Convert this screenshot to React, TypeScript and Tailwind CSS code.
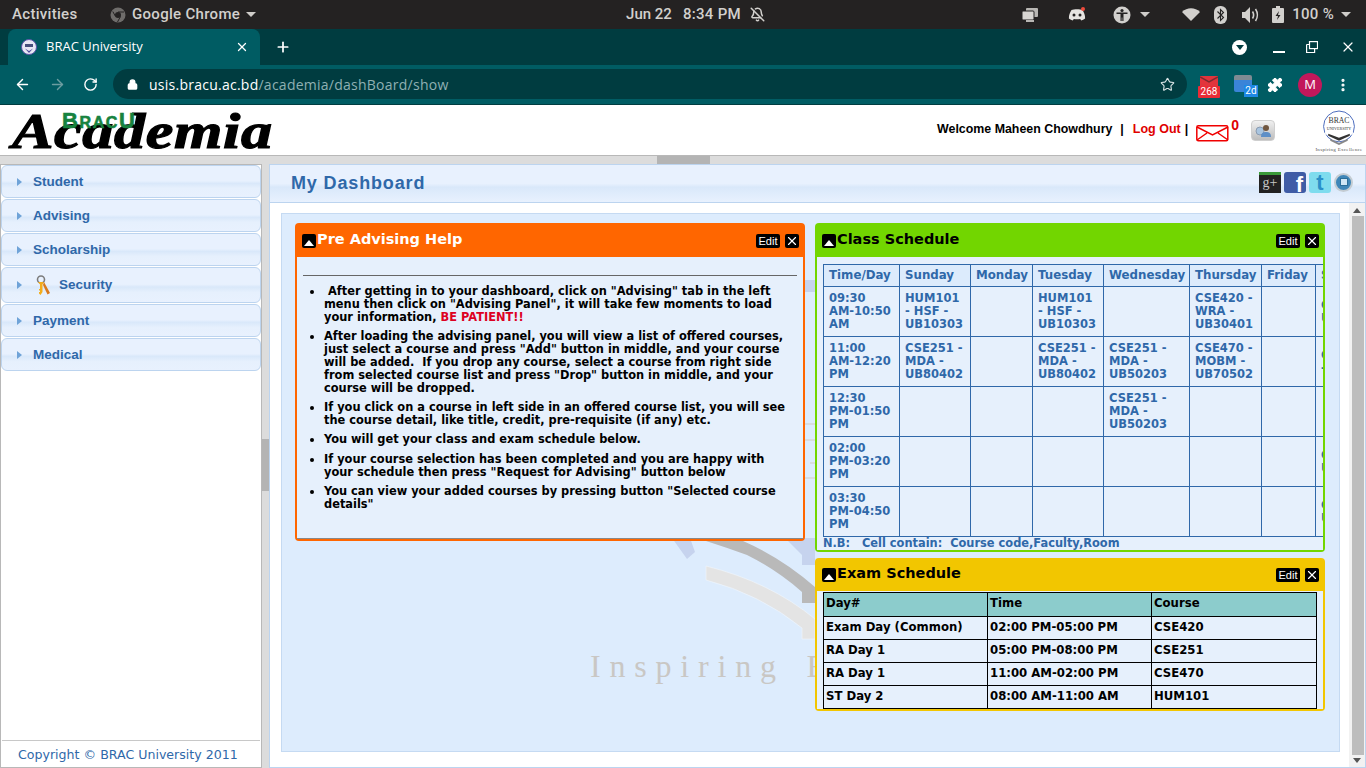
import React from "react";
import { ArrowLeft, ArrowRight, RotateCw, Lock, Star, Puzzle, X, Plus, BellOff, EllipsisVertical } from "lucide-react";

const Caret = () => <span className="inline-block w-0 h-0 border-l-[5px] border-r-[5px] border-t-[5px] border-l-transparent border-r-transparent border-t-[#cfcdca]" />;

function TopBar() {
  return (
    <div className="h-[29px] bg-[#242222] flex items-center text-[#d2d0cd] text-[15px] font-medium font-['Roboto',sans-serif] tracking-[0.3px]">
      <span className="ml-[12px] w-[98px]">Activities</span>
      <svg width="16" height="16" viewBox="0 0 16 16" className="mr-[6px]"><circle cx="8" cy="8" r="7.5" fill="#6f6d6b"/><circle cx="8" cy="8" r="3" fill="#242222"/><path d="M8 5h6M5.5 9.5 2.8 4.5M10.5 9.500 7.500 15" stroke="#242222" strokeWidth="1"/></svg>
      <span>Google Chrome</span>
      <span className="ml-[6px] flex"><Caret /></span>
      <div className="flex-1 flex items-center">
        <span className="ml-[370px] tracking-normal">Jun 22</span>
        <span className="ml-[11px]">8:34 PM</span>
        <BellOff size={15} className="ml-[9px]" strokeWidth={2.4} />
      </div>
      <div className="flex items-center">
        <svg width="18" height="16" viewBox="0 0 18 16" className="mr-[29px]"><rect x="5" y="1" width="12" height="9" rx="1" fill="#b9b7b4"/><rect x="1" y="4" width="12" height="9" rx="1" fill="#d8d6d3" stroke="#242222"/><rect x="5" y="13" width="8" height="2" fill="#b9b7b4"/></svg>
        <svg width="18" height="15" viewBox="0 0 18 15" className="mr-[27px]"><path d="M3.500 3C6 2 12 2 14.500 3c1.600 2.500 2.700 5 2.600 8.500-1.300 1-2.600 1.600-3.900 2l-1-1.600c-2 .5-4.400.5-6.400 0l-1 1.600c-1.300-.4-2.600-1-3.900-2C.8 8 1.900 5.500 3.500 3z" fill="#e6e4e1"/><circle cx="6" cy="8" r="1.500" fill="#242222"/><circle cx="12" cy="8" r="1.500" fill="#242222"/><circle cx="15" cy="2" r="2" fill="#ef4b3c"/></svg>
        <svg width="18" height="18" viewBox="0 0 18 18" className="mr-[9px]"><circle cx="9" cy="9" r="8.500" fill="#d2d0cd"/><circle cx="9" cy="4.500" r="1.600" fill="#242222"/><path d="M3.500 6.500h11v1.500h-4v7h-1.200v-3.500h-.6v3.500h-1.200v-7h-4z" fill="#242222"/></svg>
        <span className="mr-[32px] flex"><Caret /></span>
        <svg width="18" height="13" viewBox="0 0 18 13" className="mr-[14px]"><path d="M0 4C5-1 13-1 18 4l-9 9z" fill="#d2d0cd"/></svg>
        <svg width="13" height="18" viewBox="0 0 13 18" className="mr-[15px]"><rect width="13" height="18" rx="6" fill="#d2d0cd"/><path d="M3.500 5.500l6 6-3 3v-11l3 3-6 6" fill="none" stroke="#242222" strokeWidth="1.100"/></svg>
        <svg width="17" height="16" viewBox="0 0 17 16" className="mr-[13px]"><path d="M0 5h3l5-5v16l-5-5H0z" fill="#d2d0cd"/><path d="M10.500 4.500c1.300 2 1.300 5 0 7M13.500 2c2.400 3.500 2.400 8.500 0 12" fill="none" stroke="#d2d0cd" strokeWidth="1.600"/></svg>
        <svg width="12" height="17" viewBox="0 0 12 17" className="mr-[8px]"><path d="M4 0h4v2h3a1 1 0 0 1 1 1v13a1 1 0 0 1-1 1H1a1 1 0 0 1-1-1V3a1 1 0 0 1 1-1h3z" fill="#d2d0cd"/><path d="M7 5 3.500 10H6l-1 4 3.500-5H6z" fill="#242222"/></svg>
        <span>100 %</span>
        <span className="ml-[7px] mr-[15px] flex"><Caret /></span>
      </div>
    </div>
  );
}

function TabStrip() {
  return (
    <div className="h-[36px] bg-[#003c40] flex items-stretch text-white">
      <div className="ml-[8px] w-[252px] bg-[#005c63] rounded-t-[8px] flex items-center pl-[13px] pr-[11px] font-['Open_Sans',sans-serif] text-[13px]">
        <svg width="16" height="16" viewBox="0 0 16 16" className="mr-[9px]"><circle cx="8" cy="8" r="7.500" fill="#e8e8f4" stroke="#5a54a8" strokeWidth="1"/><rect x="4" y="5" width="8" height="3" fill="#46507c"/><path d="M4 9.500 8 12l4-2.500L8 14z" fill="#4a4a9a"/></svg>
        <span className="flex-1">BRAC University</span>
        <X size={14} strokeWidth={2.2} />
      </div>
      <div className="ml-[15px] flex items-center"><Plus size={16} strokeWidth={2.6} /></div>
      <div className="flex-1" />
      <div className="flex items-center">
        <span className="w-[15px] h-[15px] rounded-full bg-white flex items-center justify-center mr-[26px]"><span className="w-0 h-0 border-l-[4px] border-r-[4px] border-t-[5px] border-l-transparent border-r-transparent border-t-[#003c40] mt-[1px]" /></span>
        <span className="w-[12px] h-[2px] bg-white mr-[21px] mt-[9px]" />
        <svg width="12" height="12" viewBox="0 0 12 12" className="mr-[22px]" fill="none" stroke="#fff" strokeWidth="1.200"><rect x="3.500" y=".6" width="8" height="7"/><path d="M.6 3.500h2.500M.6 3.500v8h8V8"/></svg>
        <X size={16} strokeWidth={1.800} className="mr-[10px]" />
      </div>
    </div>
  );
}

function Toolbar() {
  return (
    <div className="h-[40px] bg-[#005c63] border-b border-[#003c40] flex items-center text-white">
      <ArrowLeft size={17} className="ml-[14px]" strokeWidth={2} />
      <ArrowRight size={17} className="ml-[18px] text-[#6c9da1]" strokeWidth={2} />
      <RotateCw size={15} className="ml-[17px]" strokeWidth={2.200} />
      <div className="ml-[15px] w-[1074px] h-[30px] rounded-full bg-[#003c40] flex items-center pl-[14px] pr-[12px] mb-[1px]">
        <Lock size={11} strokeWidth={3} fill="#fff" className="mr-[11px]" />
        <span className="flex-1 font-['Open_Sans',sans-serif] text-[14px] tracking-[0.25px] text-white">usis.bracu.ac.bd<span className="text-[#8fb0b3]">/academia/dashBoard/show</span></span>
        <Star size={15} strokeWidth={1.800} className="text-[#d7e3e4]" />
      </div>
      <div className="relative ml-[11px] mt-[4px] w-[22px] h-[22px]">
        <svg width="18" height="10" viewBox="0 0 18 10" className="absolute left-[2px] top-0"><path d="M0 0h18v10H0z" fill="#e2343c"/><path d="M0 1l9 5 9-5" fill="none" stroke="#7d2a30" strokeWidth="1.500"/></svg>
        <span className="absolute left-0 top-[10px] w-[22px] h-[12px] bg-[#ea2b36] rounded-[1px] text-[10px] leading-[12px] text-white text-center font-['Roboto',sans-serif]">268</span>
      </div>
      <div className="relative ml-[14px] mt-[3px] w-[24px] h-[22px]">
        <span className="absolute left-0 top-0 w-[18px] h-[17px] rounded-[2px] bg-[#3a84d8] border-t-[5px] border-[#7f8b93]" />
        <span className="absolute right-0 bottom-0 w-[14px] h-[12px] bg-[#1e88e5] text-[10px] leading-[12px] text-center text-white font-['Roboto',sans-serif]">2d</span>
      </div>
      <Puzzle size={16} fill="#fff" className="ml-[9px]" strokeWidth={1.500} />
      <span className="ml-[15px] w-[24px] h-[24px] rounded-full bg-[#c2185b] text-[13px] flex items-center justify-center font-['Open_Sans',sans-serif]">M</span>
      <EllipsisVertical size={16} strokeWidth={2.800} className="ml-[13px]" />
    </div>
  );
}

function Header() {
  return (
    <div className="h-[51px] bg-white border-b border-[#b8b8b8] flex items-start font-['Liberation_Sans',sans-serif] relative">
      <div className="relative ml-[8px] mt-[2px] w-[266px] h-[46px]">
        <span className="absolute left-[4px] top-[-2px] font-['Liberation_Serif',serif] font-bold italic text-[51px] leading-[52px] text-black tracking-[0.5px] [-webkit-text-stroke:1.2px_black] origin-left scale-x-[1.22] whitespace-nowrap">Academia</span>
        <span className="absolute left-[54px] top-[3px] font-bold text-[#17833f] text-[22px] leading-[22px] [-webkit-text-stroke:0.6px_#17833f] whitespace-nowrap tracking-[1.6px]">B<span className="text-[16px]">RAC</span>U</span>
      </div>
      <div className="flex-1" />
      <div className="flex items-center h-[48px] text-[12.400px] font-bold text-black">
        <span>Welcome Maheen Chowdhury</span>
        <span className="ml-[8px]">|</span>
        <span className="ml-[9px] text-[#e00000] text-[12.500px]">Log Out</span>
        <span className="ml-[4px]">|</span>
        <svg width="33" height="17" viewBox="0 0 33 17" className="ml-[8px] mt-[8px]" fill="none" stroke="#f00000" strokeWidth="1.500"><rect x=".8" y=".8" width="31" height="15" rx="1.500"/><path d="M1 2l15.500 8L32 2M1 15l10-7M32 15 22 8"/></svg>
        <span className="ml-[2px] text-[#e00000] text-[14px] mb-[8px]">0</span>
        <span className="ml-[12px] mt-[3px] w-[24px] h-[21px] rounded-[4px] bg-gradient-to-b from-[#f0f0f0] to-[#bdbdbd] border border-[#cfcfcf] flex items-center justify-center"><svg width="18" height="14" viewBox="0 0 18 14"><circle cx="6" cy="7" r="4" fill="#a9c5e0" stroke="#8a9bb0"/><circle cx="12" cy="4" r="3" fill="#70563f"/><path d="M7 13c0-4 2-5 5-5s5 1 5 5z" fill="#5d8fc7"/></svg></span>
      </div>
      <div className="ml-[43px] mr-[6px] mt-[5px] w-[42px] flex flex-col items-center">
        <svg width="34" height="37" viewBox="0 0 33 36">
          <circle cx="16.500" cy="16" r="15" fill="#fff" stroke="#3f62b8" strokeWidth="0.900"/>
          <path d="M3 21h27v3H3z" fill="#fff"/>
          <text x="16.500" y="13" textAnchor="middle" fontSize="7.500" fontFamily="Liberation Serif" fill="#333">BRAC</text>
          <text x="16.500" y="19" textAnchor="middle" fontSize="4" fontFamily="Liberation Serif" fill="#333">UNIVERSITY</text>
          <path d="M6 23l10.500 4L27 23v2l-10.500 5L6 25z" fill="#333"/><path d="M8 28l8.500 4L25 28v2l-8.500 4L8 30z" fill="#888"/>
        </svg>
        <span className="font-['Liberation_Serif',serif] font-normal text-[5px] leading-[5px] text-[#555] tracking-[0.3px] whitespace-nowrap">Inspiring Excellence</span>
      </div>
    </div>
  );
}

const menu = ["Student", "Advising", "Scholarship", "Security", "Payment", "Medical"];

function Sidebar() {
  return (
    <div className="w-[262px] bg-white border border-[#b8b8b8] flex flex-col font-['Liberation_Sans',sans-serif]">
      <div className="flex-1 flex flex-col gap-[1px]">
        {menu.map((m) => (
          <div key={m} className={`${m === "Security" ? "h-[36px]" : "h-[33px]"} rounded-[6px] border border-[#bcd4ef] bg-[linear-gradient(#e8f1fe_0%,#e8f1fe_48%,#d9e8fa_56%,#e6f0fd_72%,#e8f1fe_100%)] flex items-center pl-[15px] text-[13.500px] font-bold text-[#2f68a9]`}>
            <span className="w-0 h-0 border-t-[4px] border-b-[4px] border-l-[5px] border-t-transparent border-b-transparent border-l-[#6fa3d8]" />
            {m === "Security" && (
              <svg width="20" height="21" viewBox="0 0 20 21" className="ml-[11px] mr-[6px]"><circle cx="8" cy="4.500" r="3.500" fill="none" stroke="#7c7c7c" strokeWidth="1.600"/><path d="M5 7h6l-1.500 2.500V17l-2 3-1.500-1.500V17h1v-1.500H6V14h1V9.500z" fill="#f3ad1c"/><path d="M11 7l6 11-2.500 1.500L10 10z" fill="#d9791c"/></svg>
            )}
            <span className={m === "Security" ? "mt-[1px]" : "ml-[11px] mt-[1px]"}>{m}</span>
          </div>
        ))}
      </div>
      <div className="mx-[1px] h-[27px] border-t border-[#c8c8c8] pl-[16px] text-[12.600px] leading-[28px] text-[#2f68a9] font-['DejaVu_Sans',sans-serif]">Copyright © BRAC University 2011</div>
    </div>
  );
}

const Controls = () => (
  <div className="flex items-center gap-[5px] mt-[4px]">
    <span className="h-[14px] rounded-[2px] bg-black text-white text-[11px] leading-[14px] font-['Liberation_Sans',sans-serif] font-normal w-[24px] text-center">Edit</span>
    <span className="h-[14px] w-[14px] rounded-[2px] bg-black flex items-center justify-center"><X size={14} color="#fff" strokeWidth={2} /></span>
  </div>
);

const Toggle = () => (
  <span className="w-[14px] h-[14px] rounded-[2px] bg-black flex items-end justify-center pb-[2px] mt-[4px]"><span className="w-0 h-0 border-l-[5px] border-r-[5px] border-b-[6px] border-l-transparent border-r-transparent border-b-white" /></span>
);

function WidgetHead({ title, dark, h }: { title: string; dark?: boolean; h: string }) {
  return (
    <div className={`${h} flex items-start pl-[5px] pr-[4px]`}>
      <Toggle />
      <span className={`flex-1 ml-[1px] text-[14.500px] leading-[18px] font-bold ${dark ? "text-black" : "text-white"}`}>{title}</span>
      <Controls />
    </div>
  );
}

function PreAdvising() {
  const li = "mb-[6px]";
  return (
    <div className="h-[318px] rounded-[4px] bg-[#ff6600] px-[2px] pb-[2px] flex flex-col">
      <WidgetHead title="Pre Advising Help" h="h-[34px] pt-[7px]" />
      <div className="flex-1 bg-[#e6f0fc] px-[6px] pt-[18px] text-[11.400px] leading-[13px] font-bold text-black border-b border-[#888]">
        <div className="border-t border-[#666] mb-[10px]" />
        <ul className="list-disc pl-[21px] pr-[8px] m-0">
          <li className="mb-[6px] -mt-[1px]">&nbsp;After getting in to your dashboard, click on "Advising" tab in the left menu then click on "Advising Panel", it will take few moments to load your information, <span className="text-[#dd0022]">BE PATIENT!!</span></li>
          <li className={li}>After loading the advising panel, you will view a list of offered courses, just select a course and press "Add" button in middle, and your course will be added.&nbsp; If you drop any course, select a course from right side from selected course list and press "Drop" button in middle, and your course will be dropped.</li>
          <li className={li}>If you click on a course in left side in an offered course list, you will see the course detail, like title, credit, pre-requisite (if any) etc.</li>
          <li className="mb-[7px]">You will get your class and exam schedule below.</li>
          <li className={li}>If your course selection has been completed and you are happy with your schedule then press "Request for Advising" button below</li>
          <li>You can view your added courses by pressing button "Selected course details"</li>
        </ul>
      </div>
    </div>
  );
}

const cols = [76, 71, 62, 71, 86, 72, 54, 120];
const days = ["Time/Day", "Sunday", "Monday", "Tuesday", "Wednesday", "Thursday", "Friday", "Saturday"];
const rows = [
  ["09:30 AM-10:50 AM", "HUM101 - HSF - UB10303", "", "HUM101 - HSF - UB10303", "", "CSE420 - WRA - UB30401", "", "CSE420 - WRA - UB30401"],
  ["11:00 AM-12:20 PM", "CSE251 - MDA - UB80402", "", "CSE251 - MDA - UB80402", "CSE251 - MDA - UB50203", "CSE470 - MOBM - UB70502", "", "CSE470 - MOBM - UB70502"],
  ["12:30 PM-01:50 PM", "", "", "", "CSE251 - MDA - UB50203", "", "", ""],
  ["02:00 PM-03:20 PM", "", "", "", "", "", "", "CSE350 - TBA - UB40201"],
  ["03:30 PM-04:50 PM", "", "", "", "", "", "", "CSE350 - TBA - UB40201"],
];

function ClassSchedule() {
  return (
    <div className="h-[329px] rounded-[4px] bg-[#72d600] px-[2px] pb-[2px] flex flex-col">
      <WidgetHead title="Class Schedule" dark h="h-[34px] pt-[7px]" />
      <div className="flex-1 bg-[#e6f0fc] pl-[6px] pt-[7px] overflow-hidden text-[#2f68a9] text-[11.500px] leading-[13px] font-bold">
        <table className="table-fixed border-collapse w-[612px]">
          <colgroup>{cols.map((c, i) => <col key={i} style={{ width: c }} />)}</colgroup>
          <thead>
            <tr className="h-[22px] bg-[#dcebfc]">
              {days.map((d) => <th key={d} className="border border-[#2f68a9] px-[5px] text-left font-bold text-[11.800px] whitespace-nowrap">{d}</th>)}
            </tr>
          </thead>
          <tbody>
            {rows.map((r, i) => (
              <tr key={i} className="h-[50px]">
                {r.map((c, j) => <td key={j} className="border border-[#2f68a9] px-[5px] align-middle">{c}</td>)}
              </tr>
            ))}
          </tbody>
        </table>
        <div className="leading-[13px] whitespace-pre text-[11.400px]">{"N.B:   Cell contain:  Course code,Faculty,Room"}</div>
      </div>
    </div>
  );
}

const exams = [
  ["Exam Day (Common)", "02:00 PM-05:00 PM", "CSE420"],
  ["RA Day 1", "05:00 PM-08:00 PM", "CSE251"],
  ["RA Day 1", "11:00 AM-02:00 PM", "CSE470"],
  ["ST Day 2", "08:00 AM-11:00 AM", "HUM101"],
];

function ExamSchedule() {
  return (
    <div className="h-[153px] rounded-[4px] bg-[#f2c600] px-[2px] pb-[2px] flex flex-col mt-[6px]">
      <WidgetHead title="Exam Schedule" dark h="h-[33px] pt-[6px]" />
      <div className="flex-1 bg-[#e6f0fc] pl-[6px] pr-[6px] pt-[1px] text-black text-[11.700px] leading-[13px] font-bold">
        <table className="table-fixed border-collapse w-[493px] border border-black">
          <colgroup><col className="w-[164px]" /><col className="w-[164px]" /><col className="w-[165px]" /></colgroup>
          <thead>
            <tr className="h-[24px] bg-[#8ccccc]">
              {["Day#", "Time", "Course"].map((h) => <th key={h} className="border border-black px-[2px] pb-[2px] text-left font-bold">{h}</th>)}
            </tr>
          </thead>
          <tbody>
            {exams.map((r, i) => (
              <tr key={i} className="h-[23px]">
                {r.map((c, j) => <td key={j} className="border border-black px-[2px] pb-[2px]">{c}</td>)}
              </tr>
            ))}
          </tbody>
        </table>
      </div>
    </div>
  );
}

function Watermark() {
  return (
    <div className="absolute left-0 top-0 w-full h-full overflow-hidden">
      <svg width="1058" height="536" viewBox="282 214 1058 536" className="absolute left-0 top-0">
        <path d="M805 280h10v12h-10z" fill="#c6d3ee" />
        <path d="M805 424h10M805 440h10M805 478h10M810 463h5" stroke="#d6d6d6" strokeWidth="1.500" fill="none" />
        <path d="M672 538h18l5 14-8 7z" fill="#c6d3ee" />
        <path d="M785 538l17 17v10h13v-27z" fill="#c6d3ee" />
        <path d="M706 541H743Q782 558 815 587V603H802V592Q777 570 747 555Q728 548 706 541z" fill="#b9b9b9" />
        <path d="M706 566Q770 582 815 619V639H802V628Q760 594 706 580z" fill="#e4e4e4" stroke="#f2f6fb" strokeWidth="0.600" />
      </svg>
      <span className="absolute left-[308px] top-[436px] font-['Liberation_Serif',serif] text-[32px] leading-[32px] tracking-[8.800px] [word-spacing:5px] text-[#c9c7c4] whitespace-nowrap">Inspiring Excellence</span>
    </div>
  );
}

function Main() {
  return (
    <div className="flex-1 min-w-0 flex flex-col border border-[#bcd4ef] ml-[7px] font-['DejaVu_Sans',sans-serif]">
      <div className="h-[38px] bg-[linear-gradient(#e8f1fe_0%,#e8f1fe_50%,#d9e8fa_60%,#e8f1fe_100%)] border-b border-[#bcd4ef] flex items-center pl-[21px] pr-[12px]">
        <span className="flex-1 font-['Liberation_Sans',sans-serif] font-bold text-[18px] tracking-[0.85px] text-[#2f68a9]">My Dashboard</span>
        <div className="flex items-center gap-[3px] mt-[-3px]">
          <span className="w-[22px] h-[21px] bg-[#222] text-[#c8c8c8] border-t-[3px] border-[#3a9a3a] text-[14px] leading-[16px] text-center font-['Liberation_Serif',serif]">g+</span>
          <span className="w-[22px] h-[21px] rounded-[3px] bg-[#3f5ca6] text-white text-[22px] leading-[25px] font-bold text-right pr-[3px] overflow-hidden font-['Liberation_Sans',sans-serif]">f</span>
          <span className="w-[22px] h-[21px] rounded-[3px] bg-[#7fdcee] text-[#2a90c8] text-[22px] leading-[22px] font-bold text-center overflow-hidden font-['Liberation_Sans',sans-serif]">t</span>
          <span className="w-[19px] h-[19px] rounded-full bg-[#3f86b8] border-2 border-[#c4ccd2] flex items-center justify-center"><span className="w-[8px] h-[8px] bg-[#cfe6f5] border border-[#2a6e9a]" /></span>
        </div>
      </div>
      <div className="flex-1 min-h-0 bg-white flex">
        <div className="flex-1 pl-[11px] pt-[10px] pr-[9px] pb-[15px] flex flex-col">
          <div className="relative flex-1 bg-[#ddecfd] border border-[#c5daf2] pt-[9px] pl-[13px] flex gap-[10px]">
            <Watermark />
            <div className="relative w-[510px]"><PreAdvising /></div>
            <div className="relative w-[510px]"><ClassSchedule /><ExamSchedule /></div>
          </div>
        </div>
        <div className="w-[16px] bg-[#f2f2f2] flex flex-col items-center py-[2px]">
          <span className="w-0 h-0 border-l-[4px] border-r-[4px] border-b-[5px] border-l-transparent border-r-transparent border-b-[#555] mt-[3px]" />
          <span className="flex-1 w-[12px] bg-[#bdbdbd] my-[3px] ml-[1px]" />
          <span className="w-0 h-0 border-l-[4px] border-r-[4px] border-t-[5px] border-l-transparent border-r-transparent border-t-[#555] mb-[2px]" />
        </div>
      </div>
    </div>
  );
}

export default function App() {
  return (
    <div className="w-[1366px] h-[768px] overflow-hidden flex flex-col bg-[#dcdcdc]">
      <TopBar />
      <TabStrip />
      <Toolbar />
      <Header />
      <div className="h-[8px] flex justify-center"><span className="w-[53px] h-full bg-[#b4b4b4]" /></div>
      <div className="flex-1 min-h-0 flex relative">
        <Sidebar />
        <span className="absolute left-[262px] top-[275px] w-[7px] h-[52px] bg-[#b4b4b4]" />
        <Main />
      </div>
    </div>
  );
}
